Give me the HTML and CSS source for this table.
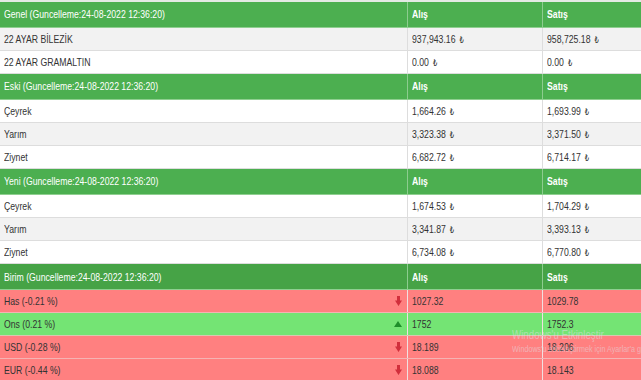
FILE: index.html
```html
<!DOCTYPE html>
<html lang="tr">
<head>
<meta charset="utf-8">
<title>Altın Fiyatları</title>
<link rel="stylesheet" href="styles.css">
</head>
<body>
<div class="board">
  <div class="row head">
    <div class="cell"><span class="t">Genel (Guncelleme:24-08-2022 12:36:20)</span></div>
    <div class="cell col"><span class="t">Alış</span></div>
    <div class="cell col"><span class="t">Satış</span></div>
  </div>
  <div class="row alt">
    <div class="cell"><span class="t">22 AYAR BİLEZİK</span></div>
    <div class="cell"><span class="t">937,943.16 <span class="tl">₺</span></span></div>
    <div class="cell"><span class="t">958,725.18 <span class="tl">₺</span></span></div>
  </div>
  <div class="row">
    <div class="cell"><span class="t">22 AYAR GRAMALTIN</span></div>
    <div class="cell"><span class="t">0.00 <span class="tl">₺</span></span></div>
    <div class="cell"><span class="t">0.00 <span class="tl">₺</span></span></div>
  </div>

  <div class="row head">
    <div class="cell"><span class="t">Eski (Guncelleme:24-08-2022 12:36:20)</span></div>
    <div class="cell col"><span class="t">Alış</span></div>
    <div class="cell col"><span class="t">Satış</span></div>
  </div>
  <div class="row">
    <div class="cell"><span class="t">Çeyrek</span></div>
    <div class="cell"><span class="t">1,664.26 <span class="tl">₺</span></span></div>
    <div class="cell"><span class="t">1,693.99 <span class="tl">₺</span></span></div>
  </div>
  <div class="row alt">
    <div class="cell"><span class="t">Yarım</span></div>
    <div class="cell"><span class="t">3,323.38 <span class="tl">₺</span></span></div>
    <div class="cell"><span class="t">3,371.50 <span class="tl">₺</span></span></div>
  </div>
  <div class="row">
    <div class="cell"><span class="t">Ziynet</span></div>
    <div class="cell"><span class="t">6,682.72 <span class="tl">₺</span></span></div>
    <div class="cell"><span class="t">6,714.17 <span class="tl">₺</span></span></div>
  </div>

  <div class="row head">
    <div class="cell"><span class="t">Yeni (Guncelleme:24-08-2022 12:36:20)</span></div>
    <div class="cell col"><span class="t">Alış</span></div>
    <div class="cell col"><span class="t">Satış</span></div>
  </div>
  <div class="row">
    <div class="cell"><span class="t">Çeyrek</span></div>
    <div class="cell"><span class="t">1,674.53 <span class="tl">₺</span></span></div>
    <div class="cell"><span class="t">1,704.29 <span class="tl">₺</span></span></div>
  </div>
  <div class="row alt">
    <div class="cell"><span class="t">Yarım</span></div>
    <div class="cell"><span class="t">3,341.87 <span class="tl">₺</span></span></div>
    <div class="cell"><span class="t">3,393.13 <span class="tl">₺</span></span></div>
  </div>
  <div class="row">
    <div class="cell"><span class="t">Ziynet</span></div>
    <div class="cell"><span class="t">6,734.08 <span class="tl">₺</span></span></div>
    <div class="cell"><span class="t">6,770.80 <span class="tl">₺</span></span></div>
  </div>

  <div class="row head dark">
    <div class="cell"><span class="t">Birim (Guncelleme:24-08-2022 12:36:20)</span></div>
    <div class="cell col"><span class="t">Alış</span></div>
    <div class="cell col"><span class="t">Satış</span></div>
  </div>
  <div class="row down">
    <div class="cell name"><span class="t">Has (-0.21 %)</span>
      <svg class="ico" width="7" height="10" viewBox="0 0 7 10"><path d="M2 0h3v4.5h2L3.5 10 0 4.5h2z" fill="#d12f3c"/></svg>
    </div>
    <div class="cell"><span class="t">1027.32</span></div>
    <div class="cell"><span class="t">1029.78</span></div>
  </div>
  <div class="row up">
    <div class="cell name"><span class="t">Ons (0.21 %)</span>
      <svg class="ico" width="8" height="6" viewBox="0 0 8 6"><path d="M4 0L8 6H0z" fill="#1f8f2a"/></svg>
    </div>
    <div class="cell"><span class="t">1752</span></div>
    <div class="cell"><span class="t">1752.3</span></div>
  </div>
  <div class="row down">
    <div class="cell name"><span class="t">USD (-0.28 %)</span>
      <svg class="ico" width="7" height="10" viewBox="0 0 7 10"><path d="M2 0h3v4.5h2L3.5 10 0 4.5h2z" fill="#d12f3c"/></svg>
    </div>
    <div class="cell"><span class="t">18.189</span></div>
    <div class="cell"><span class="t">18.206</span></div>
  </div>
  <div class="row down last">
    <div class="cell name"><span class="t">EUR (-0.44 %)</span>
      <svg class="ico" width="7" height="10" viewBox="0 0 7 10"><path d="M2 0h3v4.5h2L3.5 10 0 4.5h2z" fill="#d12f3c"/></svg>
    </div>
    <div class="cell"><span class="t">18.088</span></div>
    <div class="cell"><span class="t">18.143</span></div>
  </div>

  <div class="watermark">
    <div class="wm-title">Windows'u Etkinleştir</div>
    <div class="wm-sub">Windows'u etkinleştirmek için Ayarlar'a gidin.</div>
  </div>
</div>
</body>
</html>
```

FILE: styles.css
```css
html, body {
  margin: 0;
  padding: 0;
}

body {
  background: #e4eae4;
  padding-top: 2px;
  font-family: "Liberation Sans", Arial, "DejaVu Sans", sans-serif;
  font-size: 11px;
  color: #333333;
  overflow: hidden;
}

.board {
  position: relative;
  width: 641px;
  background: #fff;
  overflow: hidden;
}

.row {
  display: grid;
  grid-template-columns: 407px 135px 99px;
  height: 23.2px;
  box-sizing: border-box;
  border-bottom: 1px solid #dddddd;
  background: #ffffff;
}

.row.alt {
  background: #f2f2f2;
}

.cell {
  display: flex;
  align-items: center;
  padding-left: 4px;
  border-left: 1px solid #dddddd;
  white-space: nowrap;
  overflow: hidden;
}

.cell:first-child {
  border-left: none;
}

.t {
  display: inline-block;
  transform: scaleX(0.79);
  transform-origin: left center;
}

.tl {
  font-family: "DejaVu Sans", sans-serif;
  font-size: 8.5px;
  margin-left: 2px;
}

.row.head {
  height: 25.6px;
  background: #4caf50;
  color: #ffffff;
  border-bottom: 1px solid #8fcf90;
}

.row.head.dark {
  background: #46a346;
}

.row.head .cell {
  border-left-color: #8dcc8f;
}

.row.head .cell:first-child {
  border-left: none;
}

.col {
  font-weight: bold;
}

.row.down {
  background: #ff8080;
  border-bottom-color: #f5b3b3;
}

.row.up {
  background: #74e474;
  border-bottom-color: #d8c9b0;
}

.row.down .cell,
.row.up .cell {
  border-left-color: #f0e0e0;
}

.row.down .cell:first-child,
.row.up .cell:first-child {
  border-left: none;
}

.row.last {
  height: 21.4px;
  border-bottom: 1px solid #555555;
}

.name {
  justify-content: space-between;
  padding-right: 5px;
}

.ico {
  display: block;
  flex: none;
}

.watermark {
  position: absolute;
  left: 512px;
  top: 326px;
  color: rgba(225, 225, 232, 0.5);
  pointer-events: none;
  white-space: nowrap;
}

.wm-title {
  font-size: 12.5px;
  line-height: 15px;
  transform: scaleX(0.78);
  transform-origin: left center;
}

.wm-sub {
  font-size: 9px;
  line-height: 11px;
  margin-top: 1px;
  transform: scaleX(0.8);
  transform-origin: left center;
}
```
